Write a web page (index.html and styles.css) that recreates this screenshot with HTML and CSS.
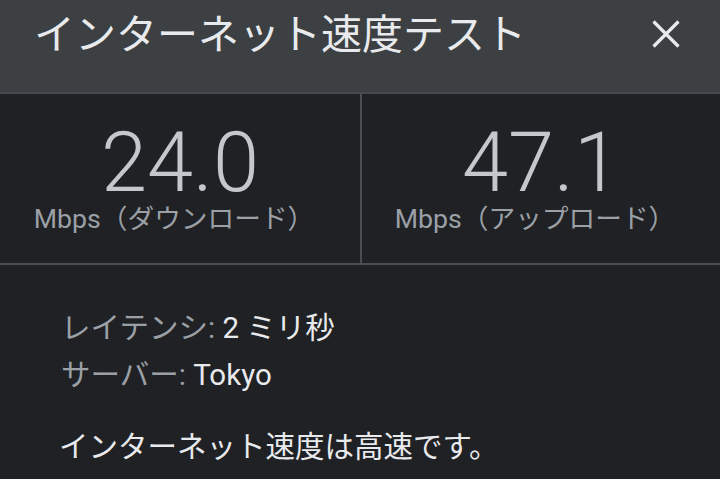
FILE: index.html
```html
<!DOCTYPE html>
<html lang="ja">
<head>
<meta charset="utf-8">
<link rel="stylesheet" href="styles.css">
</head>
<body>
<div class="dialog">
  <div class="header">
    <div class="title">インターネット速度テスト</div>
    <div class="close">
      <svg width="28" height="28" viewBox="0 0 28 28"><path d="M1.5 1.5 L26.5 26.5 M26.5 1.5 L1.5 26.5" stroke="#e8eaed" stroke-width="3.2" fill="none"/></svg>
    </div>
  </div>
  <div class="stats">
    <div class="stat">
      <div class="num">24.0</div>
      <div class="unit">Mbps（ダウンロード）</div>
    </div>
    <div class="stat">
      <div class="num">47.1</div>
      <div class="unit">Mbps（アップロード）</div>
    </div>
  </div>
  <div class="info">
    <div class="row"><span class="label">レイテンシ:</span> <span class="value">2 ミリ秒</span></div>
    <div class="row"><span class="label">サーバー:</span> <span class="value">Tokyo</span></div>
    <div class="summary">インターネット速度は高速です。</div>
  </div>
</div>
</body>
</html>
```
FILE: styles.css
```css
html, body {
  margin: 0;
  padding: 0;
  background: #202124;
  font-family: Roboto, "Noto Sans CJK JP", sans-serif;
}
.dialog {
  width: 720px;
  height: 479px;
  overflow: hidden;
}
.header {
  height: 94px;
  background: #3c4043;
  border-bottom: 2px solid #46494d;
  display: flex;
  align-items: flex-start;
  justify-content: space-between;
  padding: 0 40px 0 34px;
  box-sizing: border-box;
}
.title {
  color: #e8eaed;
  font-size: 41px;
  line-height: 41px;
  margin-top: 15px;
}
.close {
  margin-top: 20px;
  width: 28px;
  height: 28px;
}
.close svg { display: block; }
.stats {
  display: grid;
  grid-template-columns: 360px 1fr;
  height: 171px;
  border-bottom: 2px solid #4a4d51;
  box-sizing: border-box;
}
.stat {
  display: flex;
  flex-direction: column;
  align-items: center;
  padding-top: 27px;
}
.stat + .stat {
  border-left: 2px solid #4a4d51;
}
.num {
  color: #c4c7cb;
  font-size: 83px;
  font-weight: 300;
  line-height: 83px;
}
.unit {
  color: #9aa0a6;
  font-size: 26.7px;
  line-height: 30px;
  margin-right: 12px;
}
.info {
  padding: 40px 0 0 61px;
  font-size: 29.5px;
}
.row {
  line-height: 47px;
}
.label { color: #9aa0a6; }
.value { color: #e8eaed; }
.summary {
  color: #e8eaed;
  line-height: 40px;
  margin-top: 28px;
  margin-left: -2px;
}
```
